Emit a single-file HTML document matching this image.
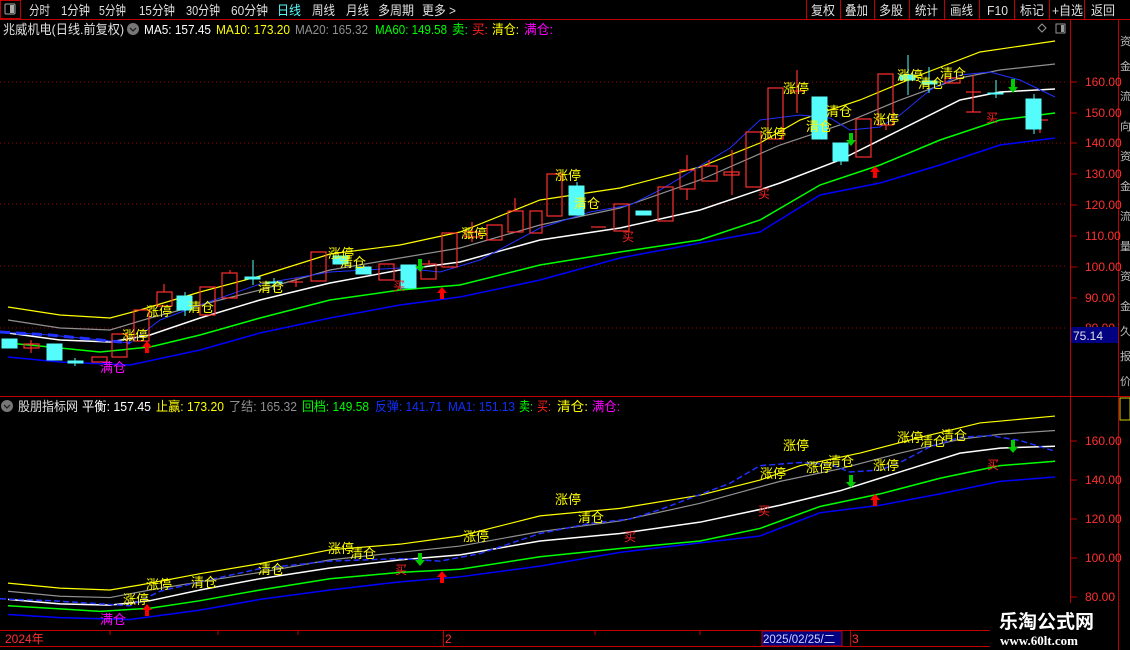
<!DOCTYPE html>
<html><head><meta charset="utf-8"><style>
*{margin:0;padding:0}
body{width:1130px;height:650px;background:#000;overflow:hidden;position:relative;font-family:"Liberation Sans","Noto Sans CJK SC",sans-serif;}
svg{position:absolute;left:0;top:0}
</style></head><body>
<svg width="1130" height="650" viewBox="0 0 1130 650" font-family="Liberation Sans, Noto Sans CJK SC, sans-serif">
<defs>
<g id="lines">
<polyline fill="none" stroke="#ffff00" stroke-width="1.2" vector-effect="non-scaling-stroke" points="8,307 60,315 110,318 140,310 200,292 260,276 330,254 400,245 460,232 540,200 620,188 700,167 760,143 800,120 860,100 920,75 980,52 1055,41"/>
<polyline fill="none" stroke="#909090" stroke-width="1.2" vector-effect="non-scaling-stroke" points="8,320 60,328 110,330 150,318 200,305 260,290 330,270 400,258 460,248 540,225 620,208 700,180 780,145 840,125 900,100 960,78 1000,70 1055,64"/>
<polyline fill="none" stroke="#ffffff" stroke-width="1.5" vector-effect="non-scaling-stroke" points="8,333 60,340 110,342 150,335 200,318 260,300 330,283 400,270 460,262 540,240 620,228 700,210 780,183 840,160 900,130 960,100 1000,92 1055,89"/>
<polyline fill="none" stroke="#00ff00" stroke-width="1.5" vector-effect="non-scaling-stroke" points="8,343 60,348 100,352 150,347 200,335 260,318 330,300 400,290 460,285 540,265 620,252 700,240 760,220 820,185 880,165 940,140 1000,120 1055,113"/>
<polyline fill="none" stroke="#0000ff" stroke-width="1.5" vector-effect="non-scaling-stroke" points="8,357 60,362 130,365 200,350 260,333 330,318 400,305 460,297 540,280 620,258 700,243 760,232 820,195 880,183 940,165 1000,145 1055,138"/>
</g>
</defs>

<!-- toolbar -->
<line x1="0" y1="19.5" x2="1130" y2="19.5" stroke="#c00000"/>
<rect x="0.5" y="0.5" width="20" height="18" fill="none" stroke="#c00000"/>
<rect x="5" y="4" width="10" height="10" rx="1" fill="none" stroke="#aaa"/><rect x="10" y="5" width="4" height="8" fill="#aaa"/>
<g font-size="13" fill="#e0e0e0">
<text x="29" y="15" textLength="21" lengthAdjust="spacingAndGlyphs">分时</text>
<text x="61" y="15" textLength="29" lengthAdjust="spacingAndGlyphs">1分钟</text>
<text x="99" y="15" textLength="27" lengthAdjust="spacingAndGlyphs">5分钟</text>
<text x="139" y="15" textLength="36" lengthAdjust="spacingAndGlyphs">15分钟</text>
<text x="186" y="15" textLength="34" lengthAdjust="spacingAndGlyphs">30分钟</text>
<text x="231" y="15" textLength="37" lengthAdjust="spacingAndGlyphs">60分钟</text>
<text x="277" y="15" textLength="24" lengthAdjust="spacingAndGlyphs" fill="#54fcfc">日线</text>
<text x="312" y="15" textLength="23" lengthAdjust="spacingAndGlyphs">周线</text>
<text x="346" y="15" textLength="23" lengthAdjust="spacingAndGlyphs">月线</text>
<text x="378" y="15" textLength="36" lengthAdjust="spacingAndGlyphs">多周期</text>
<text x="422" y="15" textLength="34" lengthAdjust="spacingAndGlyphs">更多 &gt;</text>
<text x="811" y="15" textLength="24" lengthAdjust="spacingAndGlyphs">复权</text>
<text x="845" y="15" textLength="23" lengthAdjust="spacingAndGlyphs">叠加</text>
<text x="879" y="15" textLength="24" lengthAdjust="spacingAndGlyphs">多股</text>
<text x="915" y="15" textLength="23" lengthAdjust="spacingAndGlyphs">统计</text>
<text x="950" y="15" textLength="23" lengthAdjust="spacingAndGlyphs">画线</text>
<text x="987" y="15" textLength="21" lengthAdjust="spacingAndGlyphs">F10</text>
<text x="1020" y="15" textLength="24" lengthAdjust="spacingAndGlyphs">标记</text>
<text x="1052" y="15" textLength="31" lengthAdjust="spacingAndGlyphs">+自选</text>
<text x="1091" y="15" textLength="24" lengthAdjust="spacingAndGlyphs">返回</text>
</g>
<g stroke="#c00000"><line x1="806.5" y1="0" x2="806.5" y2="19"/><line x1="840.5" y1="0" x2="840.5" y2="19"/><line x1="874.5" y1="0" x2="874.5" y2="19"/><line x1="909.5" y1="0" x2="909.5" y2="19"/><line x1="944.5" y1="0" x2="944.5" y2="19"/><line x1="979.5" y1="0" x2="979.5" y2="19"/><line x1="1014.5" y1="0" x2="1014.5" y2="19"/><line x1="1049.5" y1="0" x2="1049.5" y2="19"/><line x1="1084.5" y1="0" x2="1084.5" y2="19"/></g>

<!-- header line -->
<g font-size="13">
<text x="3" y="34" fill="#e0e0e0" textLength="121" lengthAdjust="spacingAndGlyphs">兆威机电(日线.前复权)</text>
<circle cx="133" cy="29" r="6" fill="#777"/><path d="M130 28 L133 31 L136 28" stroke="#222" fill="none" stroke-width="1.3"/>
<text x="144" y="34" fill="#fff" textLength="67" lengthAdjust="spacingAndGlyphs">MA5: 157.45</text>
<text x="216" y="34" fill="#ffff00" textLength="74" lengthAdjust="spacingAndGlyphs">MA10: 173.20</text>
<text x="295" y="34" fill="#909090" textLength="73" lengthAdjust="spacingAndGlyphs">MA20: 165.32</text>
<text x="375" y="34" fill="#00ff00" textLength="72" lengthAdjust="spacingAndGlyphs">MA60: 149.58</text>
<text x="452" y="34" fill="#00ff00" textLength="16" lengthAdjust="spacingAndGlyphs">卖:</text>
<text x="472" y="34" fill="#ff2020" textLength="16" lengthAdjust="spacingAndGlyphs">买:</text>
<text x="492" y="34" fill="#ffff00" textLength="27" lengthAdjust="spacingAndGlyphs">清仓:</text>
<text x="524" y="34" fill="#ff00ff" textLength="29" lengthAdjust="spacingAndGlyphs">满仓:</text>
</g>
<path d="M1042 24 L1046 28 L1042 32 L1038 28Z" fill="none" stroke="#999"/>
<rect x="1056" y="24" width="9" height="9" fill="none" stroke="#999"/><rect x="1061" y="25" width="3" height="7" fill="#999"/>

<!-- grid dotted -->
<g stroke="#a00000" stroke-dasharray="1,3"><line x1="0" y1="82" x2="1068" y2="82"/><line x1="0" y1="143" x2="1068" y2="143"/><line x1="0" y1="204" x2="1068" y2="204"/><line x1="0" y1="266" x2="1068" y2="266"/><line x1="0" y1="328" x2="1068" y2="328"/></g>

<!-- main lines -->
<use href="#lines"/>
<polyline fill="none" stroke="#2030ff" stroke-width="1" points="0,332 50,335 100,340 130,343 160,320 200,305 260,284 330,272 400,268 440,272 480,260 540,228 590,212 630,205 660,190 730,148 760,120 800,115 830,118 850,130 880,127 900,115 930,90 960,75 990,72 1020,80 1055,97"/>
<polyline fill="none" stroke="#2030ff" stroke-width="3" stroke-dasharray="10,6" points="0,332 50,335 100,340 130,343"/>

<!-- candles -->
<g stroke="#ff3030" fill="none" stroke-width="1.2">
<rect x="24" y="344" width="15" height="4"/><line x1="31" y1="340" x2="31" y2="353"/>
<rect x="92" y="357" width="15" height="5"/>
<rect x="112" y="334" width="15" height="23"/>
<rect x="134" y="310" width="15" height="31"/>
<rect x="157" y="292" width="15" height="14"/><line x1="164" y1="284" x2="164" y2="292"/>
<rect x="200" y="287" width="15" height="28"/>
<rect x="222" y="273" width="15" height="25"/><line x1="230" y1="270" x2="230" y2="273"/>
<line x1="289" y1="282" x2="303" y2="282"/><line x1="296" y1="278" x2="296" y2="287"/>
<rect x="311" y="252" width="15" height="29"/>
<rect x="379" y="264" width="15" height="16"/>
<rect x="421" y="264" width="15" height="15"/><line x1="429" y1="260" x2="429" y2="264"/>
<rect x="442" y="233" width="15" height="34"/>
<rect x="465" y="232" width="15" height="5"/><line x1="472" y1="222" x2="472" y2="242"/>
<rect x="487" y="225" width="15" height="15"/>
<rect x="508" y="211" width="15" height="21"/><line x1="515" y1="198" x2="515" y2="211"/>
<rect x="530" y="211" width="12" height="22"/>
<rect x="547" y="174" width="15" height="42"/>
<line x1="591" y1="227" x2="606" y2="227"/>
<rect x="614" y="204" width="15" height="27"/>
<rect x="658" y="187" width="15" height="34"/>
<rect x="680" y="170" width="15" height="19"/><line x1="687" y1="155" x2="687" y2="170"/><line x1="687" y1="189" x2="687" y2="200"/>
<rect x="702" y="166" width="15" height="15"/><line x1="709" y1="160" x2="709" y2="166"/>
<rect x="724" y="172" width="15" height="3"/><line x1="732" y1="150" x2="732" y2="195"/>
<rect x="746" y="132" width="15" height="55"/>
<rect x="768" y="88" width="15" height="51"/>
<line x1="790" y1="91" x2="805" y2="91"/><line x1="797" y1="70" x2="797" y2="113"/>
<rect x="856" y="119" width="15" height="38"/>
<rect x="878" y="74" width="15" height="51"/><line x1="886" y1="125" x2="886" y2="130"/>
<rect x="945" y="78" width="15" height="5"/>
<line x1="966" y1="92" x2="981" y2="92"/><line x1="973" y1="75" x2="973" y2="112"/><line x1="966" y1="112" x2="981" y2="112"/>
<line x1="1033" y1="120" x2="1048" y2="120"/><line x1="1040" y1="105" x2="1040" y2="133"/>
</g>
<g fill="#54fcfc" stroke="#54fcfc">
<rect x="2" y="339" width="15" height="9"/>
<rect x="47" y="344" width="15" height="16"/>
<rect x="68" y="361" width="15" height="2"/><line x1="75" y1="358" x2="75" y2="366"/>
<rect x="177" y="296" width="15" height="14"/><line x1="185" y1="292" x2="185" y2="316"/>
<rect x="245" y="277" width="15" height="2"/><line x1="253" y1="260" x2="253" y2="285"/>
<rect x="267" y="282" width="15" height="1"/><line x1="274" y1="278" x2="274" y2="290"/>
<rect x="333" y="256" width="15" height="8"/>
<rect x="356" y="267" width="15" height="7"/>
<rect x="401" y="265" width="15" height="23"/>
<rect x="569" y="186" width="15" height="29"/><line x1="577" y1="182" x2="577" y2="186"/>
<rect x="636" y="211" width="15" height="4"/>
<rect x="812" y="97" width="15" height="42"/>
<rect x="833" y="143" width="15" height="18"/><line x1="841" y1="161" x2="841" y2="165"/>
<rect x="900" y="75" width="15" height="5"/><line x1="908" y1="55" x2="908" y2="95"/>
<rect x="922" y="81" width="15" height="3"/><line x1="929" y1="67" x2="929" y2="93"/>
<rect x="988" y="93" width="15" height="1"/><line x1="996" y1="80" x2="996" y2="98"/>
<rect x="1026" y="99" width="15" height="30"/><line x1="1034" y1="94" x2="1034" y2="134"/>
</g>

<!-- main labels -->
<g font-size="13" fill="#ffff00">
<text x="146" y="316">涨停</text><text x="122" y="340">涨停</text><text x="328" y="258">涨停</text><text x="461" y="238">涨停</text><text x="555" y="180">涨停</text><text x="760" y="138">涨停</text><text x="783" y="93">涨停</text><text x="873" y="124">涨停</text><text x="897" y="80">涨停</text>
<text x="188" y="312">清仓</text><text x="258" y="292">清仓</text><text x="340" y="267">清仓</text><text x="574" y="208">清仓</text><text x="806" y="131">清仓</text><text x="826" y="116">清仓</text><text x="918" y="88">清仓</text><text x="940" y="78">清仓</text>
</g>
<text x="100" y="372" font-size="13" fill="#ff00ff">满仓</text>
<g font-size="12" fill="#ff2020"><text x="393" y="290">买</text><text x="622" y="241">买</text><text x="758" y="198">买</text><text x="986" y="122">买</text></g>
<g fill="#ff0000"><path d="M147 341 L152 347 L149 347 L149 353 L145 353 L145 347 L142 347Z"/><path d="M442 287 L447 293 L444 293 L444 299 L440 299 L440 293 L437 293Z"/><path d="M875 166 L880 172 L877 172 L877 178 L873 178 L873 172 L870 172Z"/></g>
<g fill="#00cc00"><path d="M420 272 L415 266 L418 266 L418 259 L422 259 L422 266 L425 266Z"/><path d="M851 146 L846 140 L849 140 L849 133 L853 133 L853 140 L856 140Z"/><path d="M1013 93 L1008 87 L1011 87 L1011 79 L1015 79 L1015 87 L1018 87Z"/></g>

<!-- panel separator -->
<line x1="0" y1="396.5" x2="1130" y2="396.5" stroke="#c00000"/>
<g font-size="13">
<circle cx="7" cy="406" r="6" fill="#777"/><path d="M4 405 L7 408 L10 405" stroke="#222" fill="none" stroke-width="1.3"/>
<text x="18" y="411" fill="#e0e0e0" textLength="60" lengthAdjust="spacingAndGlyphs">股朋指标网</text>
<text x="82" y="411" fill="#fff" textLength="69" lengthAdjust="spacingAndGlyphs">平衡: 157.45</text>
<text x="156" y="411" fill="#ffff00" textLength="68" lengthAdjust="spacingAndGlyphs">止赢: 173.20</text>
<text x="229" y="411" fill="#909090" textLength="68" lengthAdjust="spacingAndGlyphs">了结: 165.32</text>
<text x="302" y="411" fill="#00ff00" textLength="67" lengthAdjust="spacingAndGlyphs">回档: 149.58</text>
<text x="375" y="411" fill="#1030ff" textLength="67" lengthAdjust="spacingAndGlyphs">反弹: 141.71</text>
<text x="448" y="411" fill="#1030ff" textLength="67" lengthAdjust="spacingAndGlyphs">MA1: 151.13</text>
<text x="519" y="411" fill="#00ff00" textLength="14" lengthAdjust="spacingAndGlyphs">卖:</text>
<text x="537" y="411" fill="#ff2020" textLength="14" lengthAdjust="spacingAndGlyphs">买:</text>
<text x="557" y="411" fill="#ffff00" textLength="31" lengthAdjust="spacingAndGlyphs">清仓:</text>
<text x="592" y="411" fill="#ff00ff" textLength="28" lengthAdjust="spacingAndGlyphs">满仓:</text>
</g>

<!-- lower lines -->
<g transform="translate(0,390.3) scale(1,0.628)"><use href="#lines"/>
<polyline fill="none" stroke="#2030ff" stroke-width="1.5" stroke-dasharray="6,3" vector-effect="non-scaling-stroke" points="0,332 50,335 100,340 130,343 160,320 200,305 260,284 330,272 400,268 440,272 480,260 540,228 590,212 630,205 660,190 730,148 760,120 800,115 830,118 850,130 880,127 900,115 930,90 960,75 990,72 1020,80 1055,97"/>
</g>
<g font-size="13" fill="#ffff00">
<text x="123" y="604">涨停</text><text x="146" y="589">涨停</text><text x="328" y="553">涨停</text><text x="463" y="541">涨停</text><text x="555" y="504">涨停</text><text x="783" y="450">涨停</text><text x="760" y="478">涨停</text><text x="873" y="470">涨停</text><text x="897" y="442">涨停</text><text x="806" y="472">涨停</text>
<text x="191" y="587">清仓</text><text x="258" y="574">清仓</text><text x="350" y="558">清仓</text><text x="578" y="522">清仓</text><text x="828" y="466">清仓</text><text x="920" y="446">清仓</text><text x="941" y="440">清仓</text>
</g>
<text x="100" y="624" font-size="13" fill="#ff00ff">满仓</text>
<g font-size="12" fill="#ff2020"><text x="395" y="574">买</text><text x="624" y="541">买</text><text x="758" y="515">买</text><text x="987" y="469">买</text></g>
<g fill="#ff0000"><path d="M147 604 L152 610 L149 610 L149 616 L145 616 L145 610 L142 610Z"/><path d="M442 571 L447 577 L444 577 L444 583 L440 583 L440 577 L437 577Z"/><path d="M875 494 L880 500 L877 500 L877 506 L873 506 L873 500 L870 500Z"/></g>
<g fill="#00cc00"><path d="M420 566 L415 560 L418 560 L418 553 L422 553 L422 560 L425 560Z"/><path d="M851 488 L846 482 L849 482 L849 475 L853 475 L853 482 L856 482Z"/><path d="M1013 453 L1008 447 L1011 447 L1011 440 L1015 440 L1015 447 L1018 447Z"/></g>

<!-- right axis -->
<line x1="1070.5" y1="19" x2="1070.5" y2="630" stroke="#c00000"/>
<line x1="1118.5" y1="19" x2="1118.5" y2="650" stroke="#c00000"/>
<g font-size="12" fill="#ff3030">
<text x="1085" y="86">160.00</text><text x="1085" y="117">150.00</text><text x="1085" y="147">140.00</text><text x="1085" y="178">130.00</text><text x="1085" y="209">120.00</text><text x="1085" y="240">110.00</text><text x="1085" y="271">100.00</text><text x="1085" y="302">90.00</text><text x="1085" y="332">80.00</text>
<text x="1085" y="445">160.00</text><text x="1085" y="484">140.00</text><text x="1085" y="523">120.00</text><text x="1085" y="562">100.00</text><text x="1085" y="601">80.00</text>
</g>
<g stroke="#c00000"><line x1="1070" y1="82" x2="1077" y2="82"/><line x1="1070" y1="113" x2="1077" y2="113"/><line x1="1070" y1="143" x2="1077" y2="143"/><line x1="1070" y1="174" x2="1077" y2="174"/><line x1="1070" y1="205" x2="1077" y2="205"/><line x1="1070" y1="236" x2="1077" y2="236"/><line x1="1070" y1="267" x2="1077" y2="267"/><line x1="1070" y1="298" x2="1077" y2="298"/><line x1="1070" y1="441" x2="1077" y2="441"/><line x1="1070" y1="480" x2="1077" y2="480"/><line x1="1070" y1="519" x2="1077" y2="519"/><line x1="1070" y1="558" x2="1077" y2="558"/><line x1="1070" y1="597" x2="1077" y2="597"/></g>
<rect x="1071" y="327" width="47" height="16" fill="#000080"/>
<text x="1073" y="340" font-size="12" fill="#e0e0e0">75.14</text>
<g font-size="11" fill="#bbb"><text x="1120" y="45">资</text><text x="1120" y="70">金</text><text x="1120" y="100">流</text><text x="1120" y="130">向</text><text x="1120" y="160">资</text><text x="1120" y="190">金</text><text x="1120" y="220">流</text><text x="1120" y="250">量</text><text x="1120" y="280">资</text><text x="1120" y="310">金</text><text x="1120" y="335">久</text><text x="1120" y="360">报</text><text x="1120" y="385">价</text></g>
<rect x="1120" y="398" width="10" height="22" fill="none" stroke="#cccc00"/>

<!-- time axis -->
<line x1="0" y1="630.5" x2="1000" y2="630.5" stroke="#c00000"/>
<line x1="0" y1="646.5" x2="1000" y2="646.5" stroke="#c00000"/>
<g stroke="#c00000"><line x1="110" y1="630" x2="110" y2="635"/><line x1="218" y1="630" x2="218" y2="635"/><line x1="298" y1="630" x2="298" y2="635"/><line x1="443.5" y1="630" x2="443.5" y2="646"/><line x1="595" y1="630" x2="595" y2="635"/><line x1="700" y1="630" x2="700" y2="635"/><line x1="850.5" y1="630" x2="850.5" y2="646"/></g>
<text x="5" y="643" font-size="12" fill="#ff3030">2024年</text>
<text x="445" y="643" font-size="12" fill="#ff3030">2</text>
<rect x="762" y="631" width="80" height="15" fill="#000080" stroke="#c00000"/>
<text x="763" y="643" font-size="11.5" fill="#d0d0ff">2025/02/25/二</text>
<text x="852" y="643" font-size="12" fill="#ff3030">3</text>
<rect x="990" y="603" width="128" height="47" fill="#000"/>
<text x="999" y="628" font-size="19" font-weight="bold" fill="#fff" font-family="Noto Sans CJK SC, sans-serif">乐淘公式网</text>
<text x="1000" y="645" font-size="13" font-weight="bold" fill="#fff" font-family="Liberation Serif, serif">www.60lt.com</text>
</svg>
</body></html>
